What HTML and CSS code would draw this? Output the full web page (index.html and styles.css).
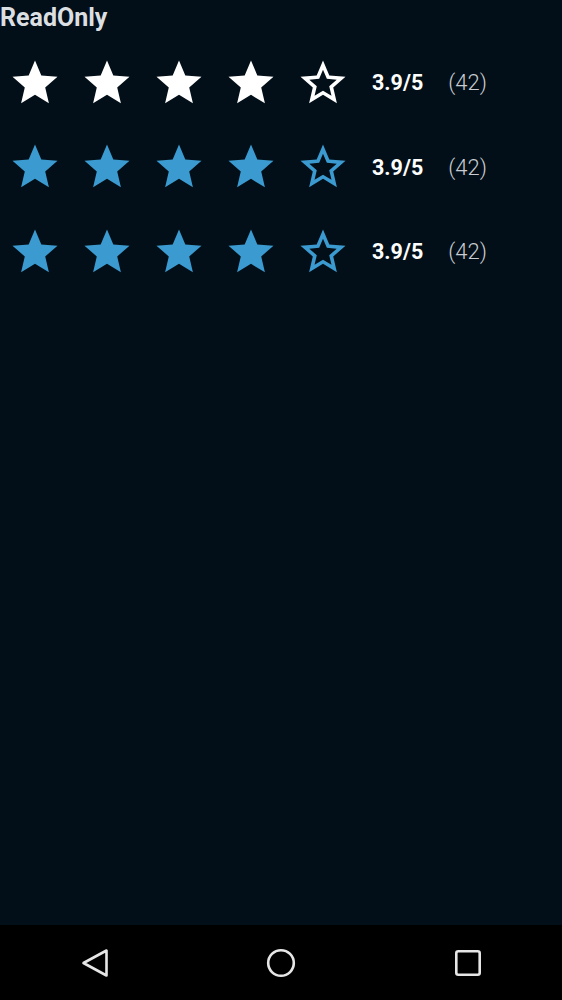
FILE: index.html
```html
<!DOCTYPE html>
<html>
<head>
<meta charset="utf-8">
<link rel="stylesheet" href="styles.css">
</head>
<body>
<div class="screen">
  <main class="content">
    <div class="title">ReadOnly</div>

    <div class="row">
      <div class="stars white">
        <svg class="star" viewBox="0 0 24 24"><path d="M12 17.27L18.18 21l-1.64-7.03L22 9.24l-7.19-.61L12 2 9.19 8.63 2 9.24l5.46 4.73L5.82 21z"/></svg>
        <svg class="star" viewBox="0 0 24 24"><path d="M12 17.27L18.18 21l-1.64-7.03L22 9.24l-7.19-.61L12 2 9.19 8.63 2 9.24l5.46 4.73L5.82 21z"/></svg>
        <svg class="star" viewBox="0 0 24 24"><path d="M12 17.27L18.18 21l-1.64-7.03L22 9.24l-7.19-.61L12 2 9.19 8.63 2 9.24l5.46 4.73L5.82 21z"/></svg>
        <svg class="star" viewBox="0 0 24 24"><path d="M12 17.27L18.18 21l-1.64-7.03L22 9.24l-7.19-.61L12 2 9.19 8.63 2 9.24l5.46 4.73L5.82 21z"/></svg>
        <svg class="star" viewBox="0 0 24 24"><path d="M22 9.24l-7.19-.62L12 2 9.19 8.63 2 9.24l5.46 4.73L5.82 21 12 17.27 18.18 21l-1.63-7.03L22 9.24zM12 15.4l-3.76 2.27 1-4.28-3.32-2.88 4.38-.38L12 6.1l1.71 4.04 4.38.38-3.32 2.88 1 4.28L12 15.4z"/></svg>
      </div>
      <span class="score">3.9/5</span>
      <span class="count">(42)</span>
    </div>

    <div class="row">
      <div class="stars blue">
        <svg class="star" viewBox="0 0 24 24"><path d="M12 17.27L18.18 21l-1.64-7.03L22 9.24l-7.19-.61L12 2 9.19 8.63 2 9.24l5.46 4.73L5.82 21z"/></svg>
        <svg class="star" viewBox="0 0 24 24"><path d="M12 17.27L18.18 21l-1.64-7.03L22 9.24l-7.19-.61L12 2 9.19 8.63 2 9.24l5.46 4.73L5.82 21z"/></svg>
        <svg class="star" viewBox="0 0 24 24"><path d="M12 17.27L18.18 21l-1.64-7.03L22 9.24l-7.19-.61L12 2 9.19 8.63 2 9.24l5.46 4.73L5.82 21z"/></svg>
        <svg class="star" viewBox="0 0 24 24"><path d="M12 17.27L18.18 21l-1.64-7.03L22 9.24l-7.19-.61L12 2 9.19 8.63 2 9.24l5.46 4.73L5.82 21z"/></svg>
        <svg class="star" viewBox="0 0 24 24"><path d="M22 9.24l-7.19-.62L12 2 9.19 8.63 2 9.24l5.46 4.73L5.82 21 12 17.27 18.18 21l-1.63-7.03L22 9.24zM12 15.4l-3.76 2.27 1-4.28-3.32-2.88 4.38-.38L12 6.1l1.71 4.04 4.38.38-3.32 2.88 1 4.28L12 15.4z"/></svg>
      </div>
      <span class="score">3.9/5</span>
      <span class="count">(42)</span>
    </div>

    <div class="row">
      <div class="stars blue">
        <svg class="star" viewBox="0 0 24 24"><path d="M12 17.27L18.18 21l-1.64-7.03L22 9.24l-7.19-.61L12 2 9.19 8.63 2 9.24l5.46 4.73L5.82 21z"/></svg>
        <svg class="star" viewBox="0 0 24 24"><path d="M12 17.27L18.18 21l-1.64-7.03L22 9.24l-7.19-.61L12 2 9.19 8.63 2 9.24l5.46 4.73L5.82 21z"/></svg>
        <svg class="star" viewBox="0 0 24 24"><path d="M12 17.27L18.18 21l-1.64-7.03L22 9.24l-7.19-.61L12 2 9.19 8.63 2 9.24l5.46 4.73L5.82 21z"/></svg>
        <svg class="star" viewBox="0 0 24 24"><path d="M12 17.27L18.18 21l-1.64-7.03L22 9.24l-7.19-.61L12 2 9.19 8.63 2 9.24l5.46 4.73L5.82 21z"/></svg>
        <svg class="star" viewBox="0 0 24 24"><path d="M22 9.24l-7.19-.62L12 2 9.19 8.63 2 9.24l5.46 4.73L5.82 21 12 17.27 18.18 21l-1.63-7.03L22 9.24zM12 15.4l-3.76 2.27 1-4.28-3.32-2.88 4.38-.38L12 6.1l1.71 4.04 4.38.38-3.32 2.88 1 4.28L12 15.4z"/></svg>
      </div>
      <span class="score">3.9/5</span>
      <span class="count">(42)</span>
    </div>
  </main>

  <nav class="navbar">
    <div class="nav-item">
      <svg class="nav-icon" viewBox="0 0 30 30"><path d="M4.5 15 L27.5 2.5 L27.5 27.5 Z" fill="none" stroke="#e6e6e6" stroke-width="2.6" stroke-linejoin="round"/></svg>
    </div>
    <div class="nav-item">
      <svg class="nav-icon" viewBox="0 0 30 30"><circle cx="15" cy="15" r="12.8" fill="none" stroke="#e6e6e6" stroke-width="2.6"/></svg>
    </div>
    <div class="nav-item">
      <svg class="nav-icon" viewBox="0 0 30 30"><rect x="3.3" y="3.3" width="23.4" height="23.4" rx="2" fill="none" stroke="#e6e6e6" stroke-width="2.6"/></svg>
    </div>
  </nav>
</div>
</body>
</html>
```

FILE: styles.css
```css
html, body {
  margin: 0;
  padding: 0;
}

body {
  background: #020f18;
  font-family: Roboto, "Liberation Sans", sans-serif;
}

.screen {
  display: flex;
  flex-direction: column;
  height: 1000px;
}

.content {
  flex: 1;
}

.title {
  font-size: 25px;
  font-weight: 700;
  line-height: 36px;
  color: #dcdfe2;
  margin-bottom: 4.5px;
}

.row {
  display: flex;
  align-items: center;
  height: 84.5px;
  padding-left: 8px;
}

.stars {
  display: flex;
  gap: 18px;
}

.star {
  width: 54px;
  height: 54px;
  display: block;
}

.stars.white .star {
  fill: #ffffff;
}

.stars.blue .star {
  fill: #3b9ad0;
}

.score {
  margin-left: 22px;
  font-size: 21.5px;
  font-weight: 700;
  color: #ffffff;
}

.count {
  margin-left: 25px;
  font-size: 22px;
  font-weight: 300;
  color: #c9ccd0;
}

.navbar {
  height: 75px;
  background: #000000;
  display: grid;
  grid-template-columns: 1fr 1fr 1fr;
  align-items: center;
  justify-items: center;
}

.nav-icon {
  width: 30px;
  height: 30px;
  display: block;
}
```
